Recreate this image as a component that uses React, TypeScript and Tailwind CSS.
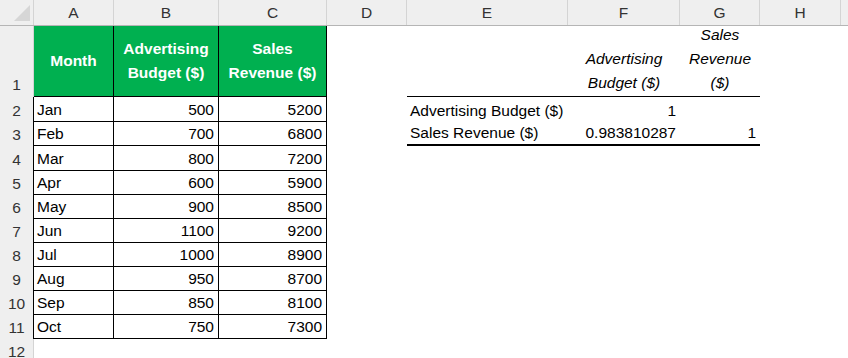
import React from "react"

const font = { fontFamily: '"Liberation Sans", Arial, sans-serif' }

const data: [string, number, number][] = [
    ["Jan", 500, 5200],
    ["Feb", 700, 6800],
    ["Mar", 800, 7200],
    ["Apr", 600, 5900],
    ["May", 900, 8500],
    ["Jun", 1100, 9200],
    ["Jul", 1000, 8900],
    ["Aug", 950, 8700],
    ["Sep", 850, 8100],
    ["Oct", 750, 7300],
]

// row heights for rows 2..12 (border included)
const rowH = ["h-[25px]", "h-[24px]", "h-[25px]", "h-[24px]", "h-[24px]", "h-[24px]", "h-[24px]", "h-[24px]", "h-[24px]", "h-[24px]", "h-[24px]"]

function ColHeader({ label, w }: { label: string; w: string }) {
    return (
        <div className={`${w} shrink-0 h-full flex items-center justify-center border-r border-[#d4d4d4] text-[#333]`}>
            {label}
        </div>
    )
}

export default function App() {
    return (
        <div className="w-[848px] h-[358px] overflow-hidden bg-white text-[15.5px] text-black" style={font}>
            {/* column headers */}
            <div className="flex h-[26px] bg-[#efefef] border-b border-[#b5b5b5]">
                <div className="w-[34px] shrink-0 h-full border-r border-[#d4d4d4] relative">
                    <svg className="absolute left-[13px] top-[4px]" width="18" height="18" viewBox="0 0 18 18">
                        <polygon points="17,1 17,17 1,17" fill="#d6d6d6" />
                    </svg>
                </div>
                <ColHeader label="A" w="w-[80px]" />
                <ColHeader label="B" w="w-[105px]" />
                <ColHeader label="C" w="w-[108px]" />
                <ColHeader label="D" w="w-[80px]" />
                <ColHeader label="E" w="w-[161px]" />
                <ColHeader label="F" w="w-[112px]" />
                <ColHeader label="G" w="w-[80px]" />
                <ColHeader label="H" w="w-[81px]" />
                <div className="flex-1" />
            </div>

            {/* row 1 */}
            <div className="flex h-[71px] leading-[24px]">
                <div className="w-[34px] shrink-0 bg-[#efefef] border-r border-[#d4d4d4] flex items-end justify-center text-[#333]">1</div>
                <div className="w-[80px] shrink-0 bg-[#00b050] border-r border-b border-black text-white font-bold flex items-center justify-center text-center">Month</div>
                <div className="w-[105px] shrink-0 bg-[#00b050] border-r border-b border-black text-white font-bold flex items-center justify-center text-center">
                    Advertising<br />Budget ($)
                </div>
                <div className="w-[108px] shrink-0 bg-[#00b050] border-r border-b border-black text-white font-bold flex items-center justify-center text-center">
                    Sales<br />Revenue ($)
                </div>
                <div className="w-[80px] shrink-0" />
                <div className="w-[161px] shrink-0 border-b border-black" />
                <div className="w-[112px] shrink-0 border-b border-black italic flex items-end justify-center text-center pb-[1px]">
                    Advertising<br />Budget ($)
                </div>
                <div className="w-[80px] shrink-0 border-b border-black italic flex items-end justify-center text-center pb-[1px]">
                    Sales<br />Revenue<br />($)
                </div>
                <div className="flex-1" />
            </div>

            {/* rows 2..12 */}
            {rowH.map((h, i) => {
                const d = data[i]
                const n = i + 2
                return (
                    <div key={n} className={`flex ${h} leading-[23px]`}>
                        <div className={`w-[34px] shrink-0 bg-[#efefef] border-r ${d ? "border-black" : "border-[#d4d4d4]"} flex items-end justify-center text-[#333]`}>
                            {n}
                        </div>
                        {d ? (
                            <>
                                <div className="w-[80px] shrink-0 border-r border-b border-black flex items-end pl-[3px]">{d[0]}</div>
                                <div className="w-[105px] shrink-0 border-r border-b border-black flex items-end justify-end pr-[4px]">{d[1]}</div>
                                <div className="w-[108px] shrink-0 border-r border-b border-black flex items-end justify-end pr-[4px]">{d[2]}</div>
                            </>
                        ) : (
                            <div className="w-[293px] shrink-0" />
                        )}
                        <div className="w-[80px] shrink-0" />
                        {n === 2 && (
                            <>
                                <div className="w-[161px] shrink-0 flex items-end pl-[3px]">Advertising Budget ($)</div>
                                <div className="w-[112px] shrink-0 flex items-end justify-end pr-[4px]">1</div>
                                <div className="w-[80px] shrink-0" />
                            </>
                        )}
                        {n === 3 && (
                            <>
                                <div className="w-[161px] shrink-0 border-b-2 border-black flex items-end pl-[3px]">Sales Revenue ($)</div>
                                <div className="w-[112px] shrink-0 border-b-2 border-black flex items-end justify-end pr-[4px]">0.983810287</div>
                                <div className="w-[80px] shrink-0 border-b-2 border-black flex items-end justify-end pr-[4px]">1</div>
                            </>
                        )}
                        <div className="flex-1" />
                    </div>
                )
            })}
        </div>
    )
}
